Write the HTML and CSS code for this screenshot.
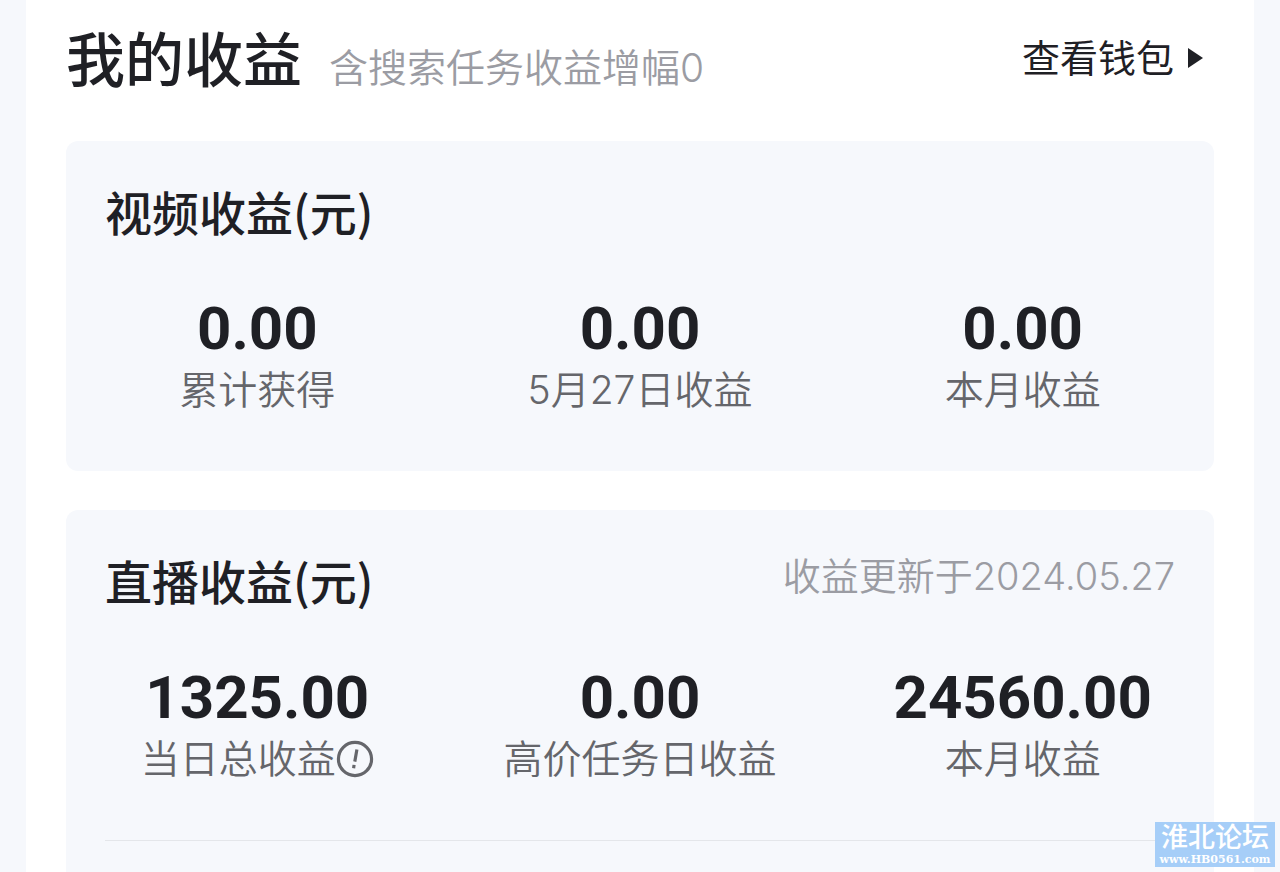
FILE: index.html
```
<!DOCTYPE html>
<html lang="zh-CN">
<head>
  <meta charset="UTF-8" />
  <meta name="viewport" content="width=device-width, initial-scale=1.0"/>
  <title>我的收益</title>
  <link rel="stylesheet" href="styles.css">
</head>
<body>
  <main class="panel">
    <header class="header">
      <h1>我的收益</h1>
      <span class="note">含搜索任务收益增幅0</span>
      <a href="#" class="wallet">查看钱包
        <svg class="arrow" viewBox="0 0 15 20" aria-hidden="true"><path d="M0 0L15 10L0 20Z"/></svg>
      </a>
    </header>

    <section class="card">
      <div class="card-head">
        <h2>视频收益(元)</h2>
      </div>
      <div class="stats">
        <div class="stat">
          <div class="num">0.00</div>
          <div class="label">累计获得</div>
        </div>
        <div class="stat">
          <div class="num">0.00</div>
          <div class="label">5月27日收益</div>
        </div>
        <div class="stat">
          <div class="num">0.00</div>
          <div class="label">本月收益</div>
        </div>
      </div>
    </section>

    <section class="card live">
      <div class="card-head">
        <h2>直播收益(元)</h2>
        <span class="update">收益更新于2024.05.27</span>
      </div>
      <div class="stats">
        <div class="stat">
          <div class="num">1325.00</div>
          <div class="label">当日总收益<button class="info" aria-label="说明"><svg viewBox="0 0 36 36"><circle cx="18" cy="18" r="15.7"/><path d="M19.8 9L17.8 20.5M17.1 23.6L16.7 26.8"/></svg></button></div>
        </div>
        <div class="stat">
          <div class="num">0.00</div>
          <div class="label">高价任务日收益</div>
        </div>
        <div class="stat">
          <div class="num">24560.00</div>
          <div class="label">本月收益</div>
        </div>
      </div>
      <hr class="line">
    </section>
  </main>

  <div class="watermark">
    <div class="site">淮北论坛</div>
    <div class="url">www.HB0561.com</div>
  </div>
</body>
</html>
```
FILE: styles.css
```
:root {
  --bg: #f6f8fc;
  --text: #1f2025;
  --label: #65666b;
  --muted: #9b9ca3;
}
* {
  box-sizing: border-box;
}
body {
  margin: 0;
  background: var(--bg);
  color: var(--text);
  font-family: Inter, "Noto Sans CJK SC", sans-serif;
}
.panel {
  display: flex;
  flex-direction: column;
  min-height: 100vh;
  margin: 0 26px;
  padding: 0 40px;
  background: #fff;
}
.header {
  display: flex;
  align-items: baseline;
  height: 141px;
  padding-top: 17px;
}
h1, h2 {
  margin: 0;
  font-family: "Noto Sans CJK SC", sans-serif;
  font-weight: 500;
}
h1 {
  font-size: 59px;
  line-height: 80px;
}
.note {
  margin-left: 27px;
  font-size: 39px;
  font-weight: 350;
  color: var(--muted);
}
.wallet {
  display: flex;
  align-items: center;
  align-self: flex-start;
  gap: 14px;
  margin-left: auto;
  padding-right: 11px;
  font-size: 38px;
  line-height: 82px;
  color: var(--text);
  text-decoration: none;
}
.arrow {
  width: 15px;
  height: 20px;
  fill: var(--text);
}
.card {
  height: 330px;
  margin-bottom: 39px;
  border-radius: 12px;
  background: var(--bg);
}
.card-head {
  display: flex;
  justify-content: space-between;
  padding: 36px 39px 0;
}
h2 {
  font-size: 47px;
  line-height: 68px;
}
.update {
  font-size: 38px;
  font-weight: 350;
  line-height: 60px;
  color: var(--muted);
}
.stats {
  display: grid;
  grid-template-columns: repeat(3, 1fr);
  margin-top: 52px;
  text-align: center;
}
.num {
  font-family: Roboto, sans-serif;
  font-size: 60px;
  font-weight: 700;
  line-height: 64px;
}
.label {
  display: flex;
  align-items: center;
  justify-content: center;
  font-size: 39px;
  font-weight: 350;
  line-height: 58px;
  color: var(--label);
}
.info {
  display: flex;
  padding: 0;
  border: none;
  background: none;
  cursor: pointer;
}
.info svg {
  width: 38px;
  height: 38px;
  fill: none;
  stroke: var(--label);
  stroke-width: 3;
}
.live {
  flex: 1;
  height: auto;
  margin-bottom: 0;
  border-radius: 12px 12px 0 0;
}
.line {
  margin: 52px 39px 0;
  border: none;
  border-top: 1px solid #e4e6ea;
}
.watermark {
  position: fixed;
  right: 5px;
  bottom: 5px;
  width: 120px;
  height: 45px;
  background: #a6cef8;
  color: #fff;
  text-align: center;
}
.site {
  font-family: "Liberation Sans", "Noto Sans CJK SC", sans-serif;
  font-size: 27px;
  font-weight: 500;
  line-height: 32px;
}
.url {
  font-family: "DejaVu Serif", serif;
  font-size: 11px;
  font-weight: 700;
  line-height: 12px;
}
```
